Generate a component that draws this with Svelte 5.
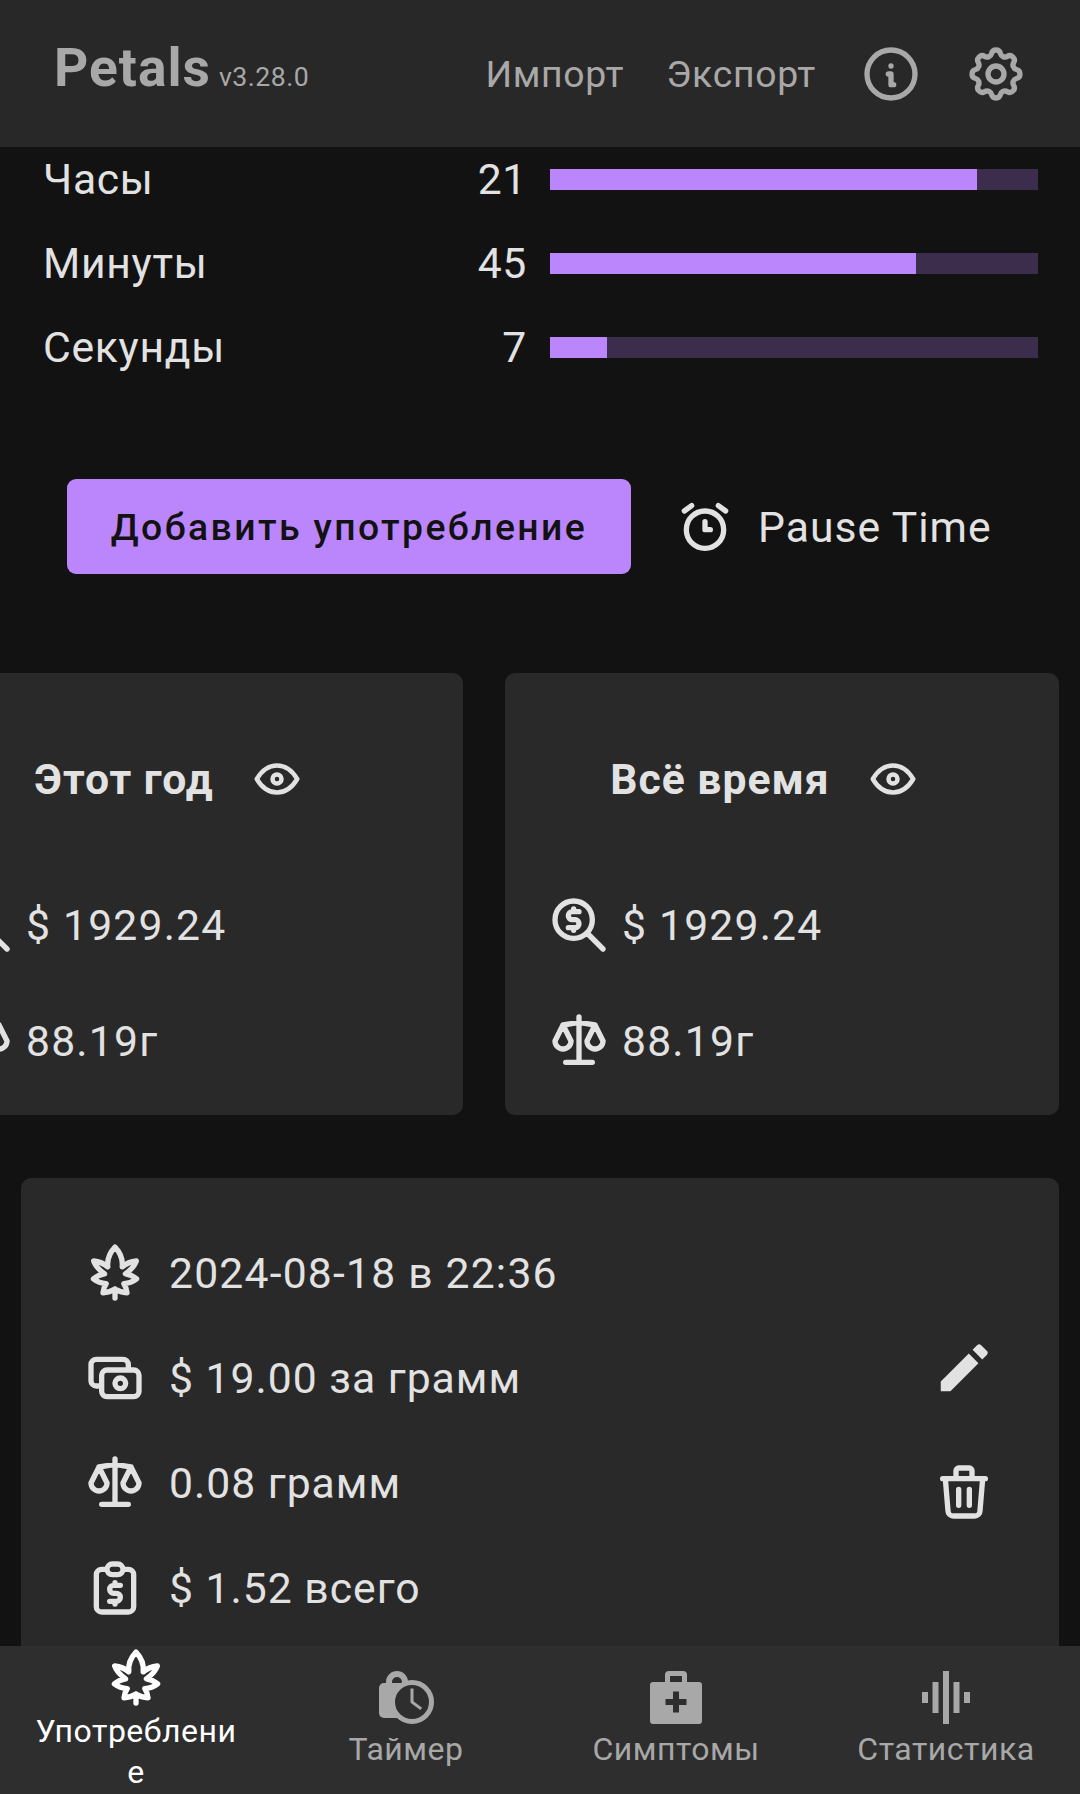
<script>
  const timers = [
    { label: 'Часы', value: 21, pct: 87.5 },
    { label: 'Минуты', value: 45, pct: 75 },
    { label: 'Секунды', value: 7, pct: 11.67 }
  ];
  const cards = [{ title: 'Этот год' }, { title: 'Всё время' }];
</script>

{#snippet leaf()}
  <path d="M12 21.4V18C10.6 18.9 9.2 19.3 7.5 19.4C7.6 18.2 8 17 8.7 16C7 15.9 5.3 15.300 3.9 14.200C5.1 13.200 6.500 12.500 8.100 12.300C6 10.800 4.600 9.400 4 7.500C6 7.700 7.800 8.400 9.300 9.700C9 7 10.200 4.200 12 2.300C13.800 4.200 15 7 14.700 9.700C16.200 8.400 18 7.700 20 7.500C19.400 9.400 18 10.800 15.900 12.300C17.500 12.500 18.900 13.200 20.100 14.200C18.700 15.300 17 15.900 15.300 16C16 17 16.400 18.200 16.500 19.400C14.800 19.300 13.400 18.900 12 18" />
{/snippet}
{#snippet scale()}
  <path d="M7 20l10 0M6 6l6 -1l6 1M12 3l0 17M9 12l-3 -6l-3 6a3 3 0 0 0 6 0M21 12l-3 -6l-3 6a3 3 0 0 0 6 0" />
{/snippet}

<div class="page">
  <header class="top">
    <div class="brand"><span class="name">Petals</span><span class="version">v3.28.0</span></div>
    <div class="actions">
      <span class="act imp">Импорт</span>
      <span class="act exp">Экспорт</span>
      <svg class="ico info" viewBox="0 0 24 24"><path d="M3 12a9 9 0 1 0 18 0a9 9 0 0 0 -18 0M12 9h.01M11 12h1v4h1" /></svg>
      <svg class="ico gear" viewBox="0 0 24 24"><path d="M10.325 4.317c.426 -1.756 2.924 -1.756 3.35 0a1.724 1.724 0 0 0 2.573 1.066c1.543 -.94 3.31 .826 2.37 2.37a1.724 1.724 0 0 0 1.065 2.572c1.756 .426 1.756 2.924 0 3.35a1.724 1.724 0 0 0 -1.066 2.573c.94 1.543 -.826 3.31 -2.37 2.37a1.724 1.724 0 0 0 -2.572 1.065c-.426 1.756 -2.924 1.756 -3.35 0a1.724 1.724 0 0 0 -2.573 -1.066c-1.543 .94 -3.31 -.826 -2.37 -2.37a1.724 1.724 0 0 0 -1.065 -2.572c-1.756 -.426 -1.756 -2.924 0 -3.35a1.724 1.724 0 0 0 1.066 -2.573c-.94 -1.543 .826 -3.31 2.37 -2.37c1 .608 2.296 .07 2.572 -1.065zM9 12a3 3 0 1 0 6 0a3 3 0 0 0 -6 0" /></svg>
    </div>
  </header>

  <main class="content">
    <section class="timers">
      {#each timers as t}
        <div class="timer">
          <span class="t-label">{t.label}</span>
          <span class="t-value">{t.value}</span>
          <div class="track"><div class="fill" style="width: {t.pct}%"></div></div>
        </div>
      {/each}
    </section>

    <section class="cta">
      <button class="add">Добавить употребление</button>
      <div class="pause">
        <svg class="ico" viewBox="0 0 24 24"><path d="M5 13a7 7 0 1 0 14 0a7 7 0 1 0 -14 0M12 10l0 3l2 0M7 4l-2.75 2M17 4l2.75 2" /></svg>
        <span>Pause Time</span>
      </div>
    </section>

    <section class="stats">
      {#each cards as c}
        <article class="stat">
          <div class="stat-head">
            <h2>{c.title}</h2>
            <svg class="ico eye" viewBox="0 0 24 24"><path d="M10 12a2 2 0 1 0 4 0a2 2 0 0 0 -4 0M21 12c-2.4 4 -5.4 6 -9 6c-3.6 0 -6.6 -2 -9 -6c2.4 -4 5.4 -6 9 -6c3.6 0 6.6 2 9 6" /></svg>
          </div>
          <div class="stat-row first">
            <svg class="ico" viewBox="0 0 24 24"><path d="M3 10a7 7 0 1 0 14 0a7 7 0 1 0 -14 0M21 21l-6 -6M12 7h-2.5a1.5 1.5 0 0 0 0 3h1a1.5 1.5 0 0 1 0 3h-2.5M10 13v1m0 -8v1" /></svg>
            <span>$ 1929.24</span>
          </div>
          <div class="stat-row">
            <svg class="ico" viewBox="0 0 24 24">{@render scale()}</svg>
            <span>88.19г</span>
          </div>
        </article>
      {/each}
    </section>

    <section class="entry">
      <div class="entry-rows">
        <div class="entry-row">
          <svg class="ico" viewBox="0 0 24 24">{@render leaf()}</svg>
          <span>2024-08-18 в 22:36</span>
        </div>
        <div class="entry-row">
          <svg class="ico" viewBox="0 0 24 24"><path d="M7 11a2 2 0 0 1 2 -2h10a2 2 0 0 1 2 2v6a2 2 0 0 1 -2 2h-10a2 2 0 0 1 -2 -2zM12 14a2 2 0 1 0 4 0a2 2 0 1 0 -4 0M17 9v-2a2 2 0 0 0 -2 -2h-10a2 2 0 0 0 -2 2v6a2 2 0 0 0 2 2h2" /></svg>
          <span class="cyr">$ 19.00 за грамм</span>
        </div>
        <div class="entry-row">
          <svg class="ico" viewBox="0 0 24 24">{@render scale()}</svg>
          <span class="cyr">0.08 грамм</span>
        </div>
        <div class="entry-row">
          <svg class="ico" viewBox="0 0 24 24"><path d="M9 5h-2a2 2 0 0 0 -2 2v12a2 2 0 0 0 2 2h10a2 2 0 0 0 2 -2v-12a2 2 0 0 0 -2 -2h-2M9 5a2 2 0 0 1 2 -2h2a2 2 0 0 1 2 2a2 2 0 0 1 -2 2h-2a2 2 0 0 1 -2 -2zM14 11h-2.5a1.5 1.5 0 0 0 0 3h1a1.5 1.5 0 0 1 0 3h-2.5M12 17v1m0 -8v1" /></svg>
          <span class="cyr">$ 1.52 всего</span>
        </div>
      </div>
      <div class="entry-tools">
        <svg class="solid" viewBox="0 0 24 24"><path d="M3 17.25V21h3.75L17.6 10.15l-3.75-3.75L3 17.25zM20.9 6.85c.39-.39.39-1.02 0-1.41l-2.34-2.34c-.39-.39-1.02-.39-1.41 0l-1.83 1.83 3.75 3.75 1.83-1.83z" /></svg>
        <svg class="ico" viewBox="0 0 24 24"><path d="M4 7l16 0M10 11l0 6M14 11l0 6M5 7l1 12a2 2 0 0 0 2 2h8a2 2 0 0 0 2 -2l1 -12M9 7v-3a1 1 0 0 1 1 -1h4a1 1 0 0 1 1 1v3" /></svg>
      </div>
    </section>
  </main>

  <nav class="bottom">
    <div class="tab active">
      <svg class="ico" viewBox="0 0 24 24">{@render leaf()}</svg>
      <span>Употребление</span>
    </div>
    <div class="tab">
      <svg class="glyph" viewBox="0 0 60 60">
        <path d="M13 20v-5a8 8 0 0 1 16 0v5" fill="none" stroke="#a8a8a8" stroke-width="6" />
        <rect x="3" y="16" width="34" height="35" rx="5" fill="#a8a8a8" />
        <circle cx="36" cy="35" r="19.5" fill="#2e2e2e" stroke="#a8a8a8" stroke-width="5" />
        <path d="M36 23v12l8 6" fill="none" stroke="#a8a8a8" stroke-width="3" stroke-linecap="square" />
      </svg>
      <span>Таймер</span>
    </div>
    <div class="tab">
      <svg class="glyph" viewBox="0 0 60 60">
        <path d="M19 15V8a4 4 0 0 1 4-4h14a4 4 0 0 1 4 4v7h12a3 3 0 0 1 3 3v36a3 3 0 0 1-3 3H7a3 3 0 0 1-3-3V18a3 3 0 0 1 3-3zM24 15h12V9H24z" fill="#a8a8a8" fill-rule="evenodd" />
        <path d="M27 24.500h6v7.500h7.500v6H33v7.500h-6V38h-7.500v-6H27z" fill="#2e2e2e" />
      </svg>
      <span>Симптомы</span>
    </div>
    <div class="tab">
      <svg class="glyph" viewBox="0 0 60 60" fill="#a8a8a8">
        <rect x="27" y="4" width="6" height="53" />
        <rect x="16.500" y="15" width="6" height="31" />
        <rect x="37.500" y="15" width="6" height="31" />
        <rect x="6" y="25" width="6" height="11" />
        <rect x="48" y="25" width="6" height="11" />
      </svg>
      <span>Статистика</span>
    </div>
  </nav>
</div>

<style>
  :global(body) {
    margin: 0;
    background: #121212;
  }
  .page {
    width: 1080px;
    height: 1794px;
    display: flex;
    flex-direction: column;
    overflow: hidden;
    background: #121212;
    color: #e2e2e2;
    font-family: Roboto, "Noto Sans", sans-serif;
    font-size: 42.67px;
    letter-spacing: 1.2px;
  }
  .ico {
    width: 64px;
    height: 64px;
    flex: none;
    fill: none;
    stroke: currentColor;
    stroke-width: 2;
    stroke-linecap: round;
    stroke-linejoin: round;
  }
  .solid {
    width: 62px;
    height: 62px;
    flex: none;
    fill: currentColor;
    margin-left: 1px;
  }

  .top {
    height: 147px;
    flex: none;
    display: flex;
    align-items: center;
    justify-content: space-between;
    box-sizing: border-box;
    padding: 0 52px 0 54px;
    background: #282828;
    color: #a8a8a8;
  }
  .brand {
    display: flex;
    align-items: baseline;
    gap: 8px;
    margin-top: -11px;
  }
  .name {
    font-size: 53.33px;
    font-weight: 700;
    letter-spacing: 1px;
  }
  .version {
    font-size: 26.67px;
    letter-spacing: 0.5px;
  }
  .actions {
    display: flex;
    align-items: center;
  }
  .act {
    font-size: 37.33px;
    letter-spacing: 0.7px;
  }
  .imp { margin-right: 42px; }
  .exp { margin-right: 43px; }
  .gear { margin-left: 41px; }

  .content {
    flex: 1;
    min-height: 0;
    overflow: hidden;
  }
  .timers {
    display: flex;
    flex-direction: column;
    gap: 34px;
    padding: 7px 42px 0 43px;
    letter-spacing: 0.7px;
  }
  .timer {
    height: 50px;
    display: flex;
    align-items: center;
  }
  .t-label { width: 400px; }
  .t-value { width: 84px; text-align: right; margin-right: 23px; }
  .track {
    flex: 1;
    height: 21px;
    background: #3c2d4d;
  }
  .fill {
    height: 100%;
    background: #bb86fc;
  }

  .cta {
    display: flex;
    align-items: center;
    margin-top: 107px;
    padding-left: 67px;
  }
  .add {
    width: 564px;
    height: 95px;
    border: 0;
    border-radius: 9px;
    background: #bb86fc;
    color: #121212;
    font-family: inherit;
    font-size: 37.33px;
    font-weight: 500;
    letter-spacing: 2.4px;
  }
  .pause {
    display: flex;
    align-items: center;
    gap: 21px;
    margin-left: 42px;
    font-size: 42.67px;
    letter-spacing: 1px;
  }

  .stats {
    display: flex;
    justify-content: flex-end;
    gap: 42px;
    margin-top: 99px;
    padding-right: 21px;
  }
  .stat {
    flex: none;
    width: 554px;
    height: 442px;
    box-sizing: border-box;
    padding-top: 74px;
    background: #292929;
    border-radius: 10px;
  }
  .stat-head {
    display: flex;
    align-items: center;
    justify-content: center;
    gap: 36px;
    padding-right: 34px;
    height: 64px;
  }
  .stat-head h2 {
    margin: 0;
    font-size: 42.67px;
    font-weight: 700;
    letter-spacing: 1px;
  }
  .eye {
    width: 54px;
    height: 54px;
  }
  .stat-row {
    display: flex;
    align-items: center;
    gap: 11px;
    height: 64px;
    padding-left: 42px;
    margin-top: 52px;
  }
  .stat-row.first { margin-top: 82px; }

  .entry {
    display: flex;
    justify-content: space-between;
    align-items: center;
    box-sizing: border-box;
    margin: 63px 21px 0;
    padding: 63px 63px 60px 62px;
    background: #292929;
    border-radius: 10px;
  }
  .entry-rows {
    display: flex;
    flex-direction: column;
    gap: 41px;
  }
  .entry-row {
    display: flex;
    align-items: center;
    gap: 22px;
    height: 64px;
  }
  .cyr { letter-spacing: 1px; }
  .entry-tools {
    display: flex;
    flex-direction: column;
    gap: 61px;
    margin-top: -1px;
  }

  .bottom {
    height: 148px;
    flex: none;
    display: grid;
    grid-template-columns: repeat(4, 270px);
    background: #2e2e2e;
    color: #a8a8a8;
  }
  .tab {
    display: flex;
    flex-direction: column;
    align-items: center;
    box-sizing: border-box;
    padding: 21px 32px 0 34px;
    font-size: 32px;
    letter-spacing: 0.5px;
    text-align: center;
    line-height: 45px;
    overflow-wrap: anywhere;
  }
  .tab.active {
    color: #fff;
    padding-top: 0;
    line-height: 41px;
  }
  .tab.active span { margin-top: 1px; }
  .glyph {
    width: 60px;
    height: 60px;
    flex: none;
  }
</style>
